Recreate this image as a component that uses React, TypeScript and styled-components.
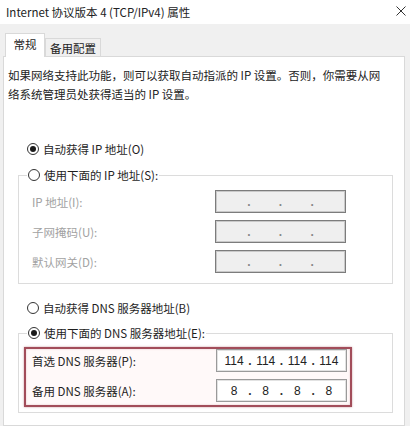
import React from "react";
import styled, { createGlobalStyle } from "styled-components";

const Global = createGlobalStyle`
  html, body { margin: 0; padding: 0; background: #fff; }
  * { box-sizing: border-box; }
`;

const Window = styled.div`
  width: 410px;
  height: 426px;
  background: #f0f0f0;
  display: flex;
  flex-direction: column;
  overflow: hidden;
  font-family: "Noto Sans CJK SC", "Noto Sans", sans-serif;
  font-size: 11.5px;
  color: #1e1e1e;
`;

const TitleBar = styled.div`
  height: 24px;
  flex: none;
  background: #fff;
  display: flex;
  align-items: center;
  justify-content: space-between;
  padding: 0 4px 0 6px;
  font-size: 11.5px;
  color: #222;
`;

const CloseIcon = styled.svg`
  width: 10px;
  height: 10px;
  margin-top: -2px;
`;

const TabStrip = styled.div`
  height: 32px;
  flex: none;
  display: flex;
  align-items: flex-end;
  padding-left: 5px;
`;

const Tab = styled.div<{ $active?: boolean }>`
  display: flex;
  align-items: center;
  justify-content: center;
  white-space: nowrap;
  border: 1px solid #d9d9d9;
  border-bottom: none;
  background: ${(p) => (p.$active ? "#fff" : "#f0f0f0")};
  height: ${(p) => (p.$active ? "24px" : "18px")};
  width: ${(p) => (p.$active ? "40px" : "56px")};
  margin-bottom: ${(p) => (p.$active ? "-1px" : "0")};
  padding-bottom: ${(p) => (p.$active ? "4px" : "0")};
  position: relative;
  z-index: ${(p) => (p.$active ? 1 : 0)};
  color: #1e1e1e;
`;

const Panel = styled.div`
  flex: 1;
  background: #fff;
  border: 1px solid #d9d9d9;
  margin: 0 5px 0 3px;
  padding: 9px 0 0 4px;
  display: flex;
  flex-direction: column;
`;

const Description = styled.p`
  margin: 0;
  line-height: 19px;
  color: #222;
`;

const RadioRow = styled.label<{ $top: number }>`
  display: flex;
  align-items: center;
  height: 20px;
  gap: 4px;
  margin: ${(p) => p.$top}px 0 0 19px;
  color: #1e1e1e;
`;

const RadioCircle = styled.span<{ $checked?: boolean }>`
  width: 12px;
  height: 12px;
  border-radius: 50%;
  border: 1px solid #333;
  background: #fff;
  display: flex;
  align-items: center;
  justify-content: center;
  flex: none;
  &::after {
    content: "";
    width: 6px;
    height: 6px;
    border-radius: 50%;
    background: ${(p) => (p.$checked ? "#1a1a1a" : "transparent")};
  }
`;

const Group = styled.fieldset<{ $top: number; $pad: string }>`
  margin: ${(p) => p.$top}px 11px 0 10px;
  border: 1px solid #dcdcdc;
  padding: ${(p) => p.$pad};
  min-width: 0;
`;

const Legend = styled.legend`
  padding: 0 1px;
  margin-left: 8px;
  display: flex;
  align-items: center;
  gap: 4px;
  height: 20px;
  color: #1e1e1e;
`;

const FieldGrid = styled.div<{ $labelWidth: number; $indent: number }>`
  display: grid;
  grid-template-columns: ${(p) => p.$labelWidth}px 131px;
  row-gap: 7px;
  align-items: center;
  padding-left: ${(p) => p.$indent}px;
`;

const FieldLabel = styled.span<{ $disabled?: boolean }>`
  color: ${(p) => (p.$disabled ? "#a2a2a2" : "#1e1e1e")};
`;

const IpBox = styled.div<{ $disabled?: boolean }>`
  height: 23px;
  display: grid;
  grid-template-columns: 1fr auto 1fr auto 1fr auto 1fr;
  align-items: center;
  border: 1px solid ${(p) => (p.$disabled ? "#7c7c7c" : "#9a9a9a")};
  box-shadow: inset 0 0 0 1px ${(p) => (p.$disabled ? "#c9c9c9" : "#e2e2e2")};
  background: ${(p) => (p.$disabled ? "#efefef" : "#fff")};
  font-family: "Liberation Sans", "Noto Sans", sans-serif;
  font-size: 12px;
  color: #222;
  padding: 0 3px;
`;

const Octet = styled.span`
  text-align: center;
`;

const Dot = styled.span<{ $disabled?: boolean }>`
  color: ${(p) => (p.$disabled ? "#888" : "#333")};
  font-weight: bold;
  padding-top: 1px;
`;

const Highlight = styled.div`
  margin: 4px 0 5px 5px;
  width: 328px;
  border: 2px solid #a24d5a;
  box-shadow: 0 0 2px rgba(162, 77, 90, 0.55), inset 0 0 2px rgba(162, 77, 90, 0.35);
  background: #fff9f9;
  padding: 0 3px 3px 0;
`;

function Ip({ values, disabled }: { values?: string[]; disabled?: boolean }) {
  const v = values ?? ["", "", "", ""];
  return (
    <IpBox $disabled={disabled}>
      <Octet>{v[0]}</Octet>
      <Dot $disabled={disabled}>.</Dot>
      <Octet>{v[1]}</Octet>
      <Dot $disabled={disabled}>.</Dot>
      <Octet>{v[2]}</Octet>
      <Dot $disabled={disabled}>.</Dot>
      <Octet>{v[3]}</Octet>
    </IpBox>
  );
}

export default function App() {
  return (
    <>
      <Global />
      <Window>
        <TitleBar>
          <span>Internet 协议版本 4 (TCP/IPv4) 属性</span>
          <CloseIcon viewBox="0 0 10 10">
            <path d="M0.5 0.5 L9.5 9.5 M9.5 0.5 L0.5 9.5" stroke="#333" strokeWidth="1" fill="none" />
          </CloseIcon>
        </TitleBar>
        <TabStrip>
          <Tab $active>常规</Tab>
          <Tab>备用配置</Tab>
        </TabStrip>
        <Panel>
          <Description>
            如果网络支持此功能，则可以获取自动指派的 IP 设置。否则，你需要从网
            <br />
            络系统管理员处获得适当的 IP 设置。
          </Description>

          <RadioRow $top={35}>
            <RadioCircle $checked />
            自动获得 IP 地址(O)
          </RadioRow>

          <Group $top={6} $pad="5px 0 10px 0">
            <Legend>
              <RadioCircle />
              使用下面的 IP 地址(S):
            </Legend>
            <FieldGrid $labelWidth={183} $indent={13}>
              <FieldLabel $disabled>IP 地址(I):</FieldLabel>
              <Ip disabled />
              <FieldLabel $disabled>子网掩码(U):</FieldLabel>
              <Ip disabled />
              <FieldLabel $disabled>默认网关(D):</FieldLabel>
              <Ip disabled />
            </FieldGrid>
          </Group>

          <RadioRow $top={14}>
            <RadioCircle />
            自动获得 DNS 服务器地址(B)
          </RadioRow>

          <Group $top={5} $pad="0">
            <Legend>
              <RadioCircle $checked />
              使用下面的 DNS 服务器地址(E):
            </Legend>
            <Highlight>
              <FieldGrid $labelWidth={184} $indent={6}>
                <FieldLabel>首选 DNS 服务器(P):</FieldLabel>
                <Ip values={["114", "114", "114", "114"]} />
                <FieldLabel>备用 DNS 服务器(A):</FieldLabel>
                <Ip values={["8", "8", "8", "8"]} />
              </FieldGrid>
            </Highlight>
          </Group>
        </Panel>
      </Window>
    </>
  );
}
